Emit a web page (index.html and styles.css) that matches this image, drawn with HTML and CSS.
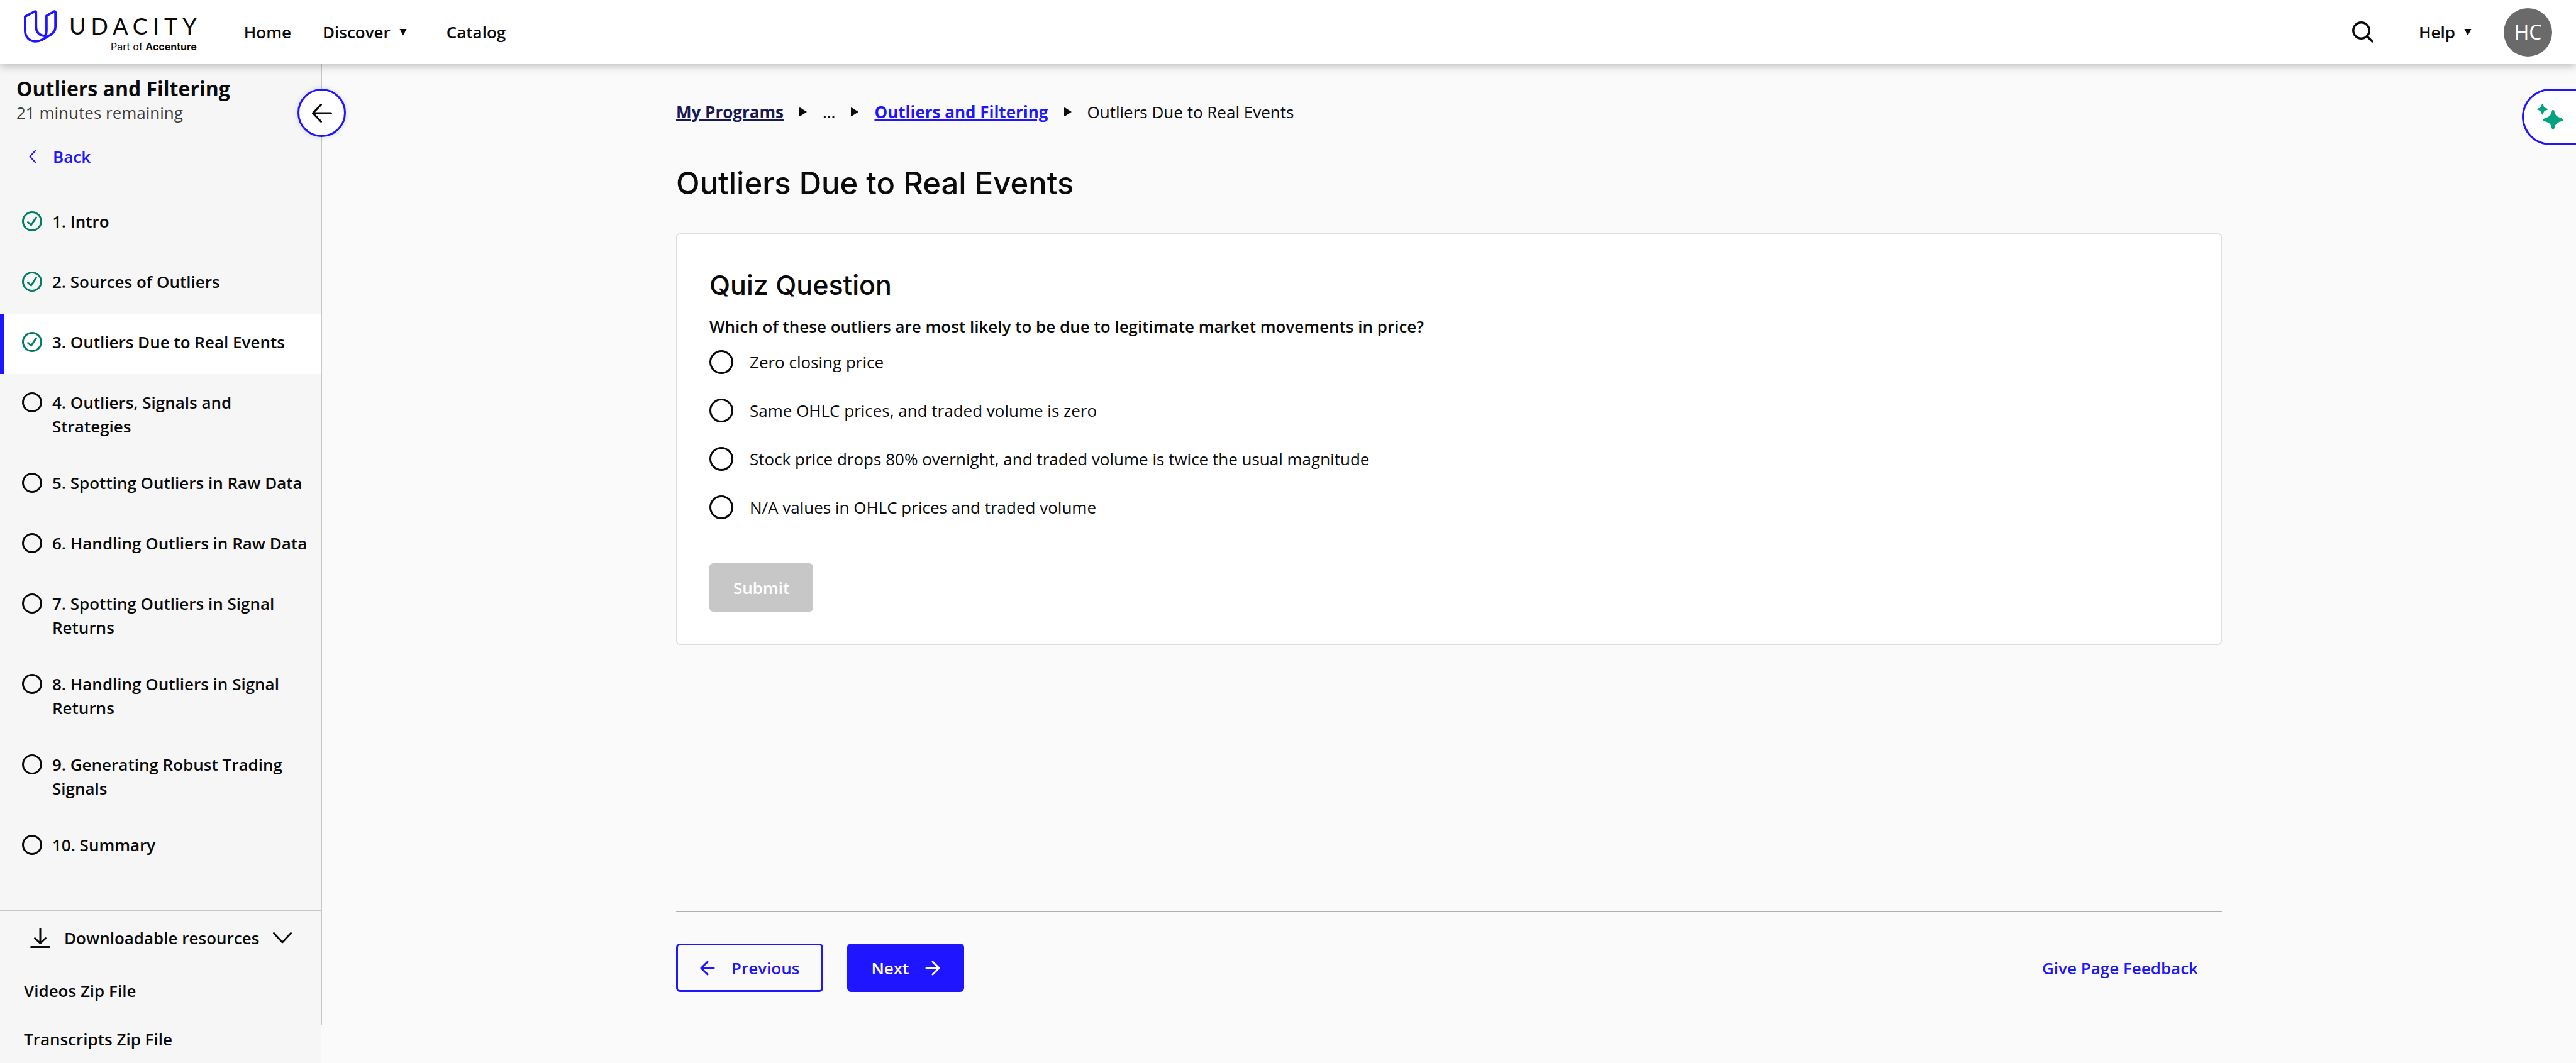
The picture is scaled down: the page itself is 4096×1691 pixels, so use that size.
FILE: index.html
```html
<!DOCTYPE html>
<html lang="en">
<head>
<meta charset="utf-8">
<meta name="viewport" content="width=device-width, initial-scale=1">
<title>Outliers Due to Real Events</title>
<link rel="stylesheet" href="styles.css">
</head>
<body>
<svg class="sprite" aria-hidden="true">
  <symbol id="check" viewBox="0 0 32 32">
    <circle cx="16" cy="16" r="14.5" fill="none" stroke="currentColor" stroke-width="3"/>
    <path d="M9.500 17.500l5 4.500 8-12" fill="none" stroke="currentColor" stroke-width="3" stroke-linecap="round" stroke-linejoin="round"/>
  </symbol>
  <symbol id="ring" viewBox="0 0 32 32">
    <circle cx="16" cy="16" r="14.500" fill="none" stroke="currentColor" stroke-width="3"/>
  </symbol>
  <symbol id="caret-down" viewBox="0 0 12 11">
    <path d="M.5 0h11L6 10.500z" fill="currentColor"/>
  </symbol>
  <symbol id="caret-right" viewBox="0 0 12 14">
    <path d="M1 0L12 7 1 14Q0 14 0 13V1Q0 0 1 0z" fill="currentColor"/>
  </symbol>
</svg>

<header class="topbar">
  <a class="logo" href="#" aria-label="Udacity, part of Accenture">
    <svg class="logo-mark" viewBox="54 62 194 192" aria-hidden="true">
      <path d="M180 214C148 214 126 193 126 160V73Q125 68 119 69L61 100V185C61 222 90 247 124 247C140 247 152 243 165 236L212 208C233 196 241 180 241 160V73Q239 68 234 69L188 95V185C188 203 184 212 170 219" fill="none" stroke="#2015ff" stroke-width="14" stroke-linejoin="round"/>
    </svg>
    <span class="wordmark">
      <span class="wordmark-name">UDACITY</span>
      <span class="wordmark-tag">Part of <b>Accenture</b></span>
    </span>
  </a>
  <nav class="topnav" aria-label="Primary">
    <a href="#">Home</a>
    <button class="menu discover" type="button">Discover <svg class="caret" aria-hidden="true"><use href="#caret-down"/></svg></button>
    <a href="#">Catalog</a>
  </nav>
  <div class="tools">
    <button class="search" type="button" aria-label="Search">
      <svg viewBox="0 0 34 34" aria-hidden="true"><g fill="none" stroke="currentColor" stroke-width="3.500" stroke-linecap="round"><circle cx="14.500" cy="14.500" r="12.700"/><path d="M24 24l8 8"/></g></svg>
    </button>
    <button class="menu" type="button">Help <svg class="caret" aria-hidden="true"><use href="#caret-down"/></svg></button>
    <button class="avatar" type="button" aria-label="Account">HC</button>
  </div>
</header>

<div class="shell">
  <aside class="sidebar">
    <div class="sidebar-content">
      <div class="lesson">
        <h2 class="lesson-title">Outliers and Filtering</h2>
        <p class="lesson-time">21 minutes remaining</p>
      </div>
      <a class="back" href="#">
        <svg viewBox="0 0 12 22" aria-hidden="true"><path d="M10.500 1.500L1.500 11l9 9.500" fill="none" stroke="currentColor" stroke-width="2" stroke-linecap="round" stroke-linejoin="round"/></svg>
        Back
      </a>
      <ol class="pages">
        <li><a class="page done" href="#"><svg aria-hidden="true"><use href="#check"/></svg><span>1. Intro</span></a></li>
        <li><a class="page done" href="#"><svg aria-hidden="true"><use href="#check"/></svg><span>2. Sources of Outliers</span></a></li>
        <li><a class="page done current" href="#" aria-current="page"><svg aria-hidden="true"><use href="#check"/></svg><span>3. Outliers Due to Real Events</span></a></li>
        <li><a class="page" href="#"><svg aria-hidden="true"><use href="#ring"/></svg><span>4. Outliers, Signals and Strategies</span></a></li>
        <li><a class="page" href="#"><svg aria-hidden="true"><use href="#ring"/></svg><span>5. Spotting Outliers in Raw Data</span></a></li>
        <li><a class="page" href="#"><svg aria-hidden="true"><use href="#ring"/></svg><span>6. Handling Outliers in Raw Data</span></a></li>
        <li><a class="page" href="#"><svg aria-hidden="true"><use href="#ring"/></svg><span>7. Spotting Outliers in Signal Returns</span></a></li>
        <li><a class="page" href="#"><svg aria-hidden="true"><use href="#ring"/></svg><span>8. Handling Outliers in Signal Returns</span></a></li>
        <li><a class="page" href="#"><svg aria-hidden="true"><use href="#ring"/></svg><span>9. Generating Robust Trading Signals</span></a></li>
        <li><a class="page" href="#"><svg aria-hidden="true"><use href="#ring"/></svg><span>10. Summary</span></a></li>
      </ol>
      <section class="resources">
        <button class="resources-toggle" type="button" aria-expanded="true">
          <svg class="download" viewBox="0 0 32 32" aria-hidden="true"><path d="M16 1.500V24M7.500 16.500l8.500 8 8.500-8M1.500 30.500h29" fill="none" stroke="currentColor" stroke-width="3" stroke-linecap="round" stroke-linejoin="round"/></svg>
          Downloadable resources
          <svg class="chevron" viewBox="0 0 30 18" aria-hidden="true"><path d="M1.500 1.500L15 16 28.500 1.500" fill="none" stroke="currentColor" stroke-width="3" stroke-linecap="round" stroke-linejoin="round"/></svg>
        </button>
        <ul class="files">
          <li><a href="#">Videos Zip File</a></li>
          <li><a href="#">Transcripts Zip File</a></li>
        </ul>
      </section>
    </div>
    <button class="collapse" type="button" aria-label="Collapse sidebar">
      <svg viewBox="0 0 32 32" aria-hidden="true"><path d="M30.500 16H1.500M14.500 2.500L1.500 16l13 13.500" fill="none" stroke="currentColor" stroke-width="3" stroke-linecap="round" stroke-linejoin="round"/></svg>
    </button>
  </aside>

  <main class="content">
    <nav class="crumbs" aria-label="Breadcrumb">
      <a class="crumb-root" href="#">My Programs</a>
      <svg aria-hidden="true"><use href="#caret-right"/></svg>
      <span>...</span>
      <svg aria-hidden="true"><use href="#caret-right"/></svg>
      <a href="#">Outliers and Filtering</a>
      <svg aria-hidden="true"><use href="#caret-right"/></svg>
      <span>Outliers Due to Real Events</span>
    </nav>
    <h1 class="title">Outliers Due to Real Events</h1>

    <form class="quiz">
      <h2 class="quiz-title">Quiz Question</h2>
      <fieldset class="choices">
        <legend>Which of these outliers are most likely to be due to legitimate market movements in price?</legend>
        <label class="choice"><input type="radio" name="answer">Zero closing price</label>
        <label class="choice"><input type="radio" name="answer">Same OHLC prices, and traded volume is zero</label>
        <label class="choice"><input type="radio" name="answer">Stock price drops 80% overnight, and traded volume is twice the usual magnitude</label>
        <label class="choice"><input type="radio" name="answer">N/A values in OHLC prices and traded volume</label>
      </fieldset>
      <button class="btn submit" type="submit" disabled>Submit</button>
    </form>

    <footer class="pager">
      <button class="btn previous" type="button">
        <svg viewBox="0 0 24 24" aria-hidden="true"><path d="M22 12H2M12 2L2 12l10 10" fill="none" stroke="currentColor" stroke-width="3" stroke-linecap="round" stroke-linejoin="round"/></svg>
        Previous
      </button>
      <button class="btn next" type="button">
        Next
        <svg viewBox="0 0 24 24" aria-hidden="true"><path d="M2 12h20M12 2l10 10-10 10" fill="none" stroke="currentColor" stroke-width="3" stroke-linecap="round" stroke-linejoin="round"/></svg>
      </button>
      <a class="feedback" href="#">Give Page Feedback</a>
    </footer>
  </main>

  <button class="assistant" type="button" aria-label="Open AI assistant">
    <svg viewBox="0 0 42 42" aria-hidden="true"><g fill="#02a381"><path d="M25.500 9.500Q27 9.500 27.500 12C29.500 19 31 20.500 38.500 23Q41.500 24 41.500 25.500Q41.500 27 38.500 28C31 30.500 29.500 32 27.500 39Q27 41.500 25.500 41.500Q24 41.500 23.500 39C21.500 32 20 30.500 12.500 28Q9.500 27 9.500 25.500Q9.500 24 12.500 23C20 20.500 21.500 19 23.500 12Q24 9.500 25.500 9.500z"/><path d="M8.500 0Q9.500 0 10 2C11 5.500 12 6.500 15.500 7.500Q17.500 8 17.500 8.800Q17.500 9.500 15.500 10C12 11 11 12 10 15.500Q9.500 17.500 8.500 17.500Q7.700 17.500 7.200 15.500C6.200 12 5 11 2 10Q0 9.500 0 8.800Q0 8 2 7.500C5 6.500 6.200 5.500 7.200 2Q7.700 0 8.500 0z"/></g></svg>
  </button>
</div>
</body>
</html>
```
FILE: styles.css
```css
:root {
  --blue: #2015ff;
  --ink: #0b0b0b;
  --line: #c6c6c6;
  --header: 102px;
}

*, *::before, *::after { box-sizing: border-box; }

body {
  margin: 0;
  background: #fafafa;
  color: var(--ink);
  font: 400 26px/38px "Open Sans", "Noto Sans", sans-serif;
}

h1, h2, p, ul, ol { margin: 0; padding: 0; font-weight: inherit; }
ul, ol { list-style: none; }
a { color: inherit; text-decoration: none; }
svg { display: block; flex: none; }

button {
  margin: 0;
  padding: 0;
  border: 0;
  background: none;
  color: inherit;
  font: inherit;
  cursor: pointer;
}

.sprite { display: none; }

/* Top bar */
.topbar {
  position: relative;
  z-index: 2;
  display: flex;
  align-items: center;
  height: var(--header);
  padding: 0 38px;
  background: #fff;
  box-shadow: 0 3px 13px rgba(0, 0, 0, .25);
  font-weight: 600;
}

.logo {
  display: flex;
  align-self: flex-start;
  gap: 20px;
  padding-top: 16px;
}

.logo-mark { width: 52px; height: 52px; }

.wordmark {
  display: flex;
  flex-direction: column;
  align-items: flex-end;
  gap: 5px;
  padding-top: 7px;
}

.wordmark-name {
  font: 400 36px/36px Lato, sans-serif;
  letter-spacing: 8px;
}

.wordmark-tag {
  padding-right: 8px;
  font: 400 16px/20px Inter, sans-serif;
}

.wordmark-tag b { font-weight: 700; }

.topnav {
  display: flex;
  gap: 50px;
  margin-left: 67px;
}

.menu { display: flex; align-items: center; gap: 14px; font-weight: 600; }
.discover { margin-right: 13px; }
.caret { width: 12px; height: 11px; }

.tools {
  display: flex;
  align-items: center;
  margin-left: auto;
}

.search { margin-right: 72px; }
.search svg { width: 34px; height: 34px; }

.avatar {
  width: 77px;
  height: 77px;
  margin-left: 51px;
  border-radius: 50%;
  background: #6a6a6a;
  color: #fff;
  font-size: 32px;
  font-weight: 400;
}

/* Sidebar */
.shell {
  position: relative;
  display: flex;
  align-items: flex-start;
}

.sidebar {
  position: relative;
  flex: none;
  width: 512px;
  height: calc(100vh - 163px);
  border-right: 2px solid var(--line);
}

.sidebar-content {
  min-height: calc(100vh - var(--header));
  padding-top: 20px;
  background: #f6f6f6;
  font-weight: 600;
}

.lesson { padding: 0 26px; }
.lesson-title { font-size: 32px; font-weight: 700; }
.lesson-time { color: #3d3d3d; font-weight: 400; }

.back {
  display: flex;
  align-items: center;
  gap: 26px;
  margin: 32px 0 39px;
  padding-left: 46px;
  color: var(--blue);
}

.back svg { width: 12px; height: 22px; }

.page {
  display: flex;
  align-items: flex-start;
  gap: 16px;
  min-height: 96px;
  padding: 26px 16px 26px 29px;
  border-left: 6px solid transparent;
}

.page svg { width: 32px; height: 32px; margin-top: 3px; }
.page.done svg { color: #047d65; }
.page.current { border-left-color: var(--blue); background: #fff; }

.resources {
  margin-top: 52px;
  padding-top: 24px;
  border-top: 2px solid var(--line);
}

.resources-toggle {
  display: flex;
  align-items: center;
  gap: 22px;
  padding-left: 48px;
  font-weight: 600;
}

.download { width: 32px; height: 32px; }
.chevron { width: 30px; height: 18px; }

.files {
  display: grid;
  gap: 39px;
  padding: 46px 38px 18px;
}

.collapse {
  position: absolute;
  top: 39px;
  right: -40px;
  display: grid;
  place-items: center;
  width: 77px;
  height: 77px;
  border: 3px solid var(--blue);
  border-radius: 50%;
  background: #fff;
  box-shadow: 0 0 8px rgba(0, 0, 0, .15);
}

.collapse svg { width: 32px; height: 32px; }

/* Page content */
.content {
  display: flex;
  flex: 1;
  flex-direction: column;
  max-width: 2458px;
  min-height: calc(100vh - var(--header));
  margin: 0 auto;
  padding: 57px 0 113px;
}

.crumbs {
  display: flex;
  align-items: center;
  gap: 25px;
}

.crumbs svg { width: 12px; height: 14px; }

.crumbs a {
  color: var(--blue);
  font-weight: 700;
  text-decoration: underline;
}

.crumbs .crumb-root { color: #171a53; }

.title, .quiz-title { font-family: Inter, sans-serif; font-weight: 500; line-height: 58px; }
.title { margin: 66px 0 50px; font-size: 49px; }
.quiz-title { margin-bottom: 18px; font-size: 43px; }

.quiz {
  padding: 51px;
  border: 2px solid #dedede;
  border-radius: 6px;
  background: #fff;
}

.choices {
  display: flex;
  flex-direction: column;
  gap: 39px;
  min-width: 0;
  margin: 0 0 70px;
  padding: 0;
  border: 0;
}

.choices legend {
  margin-bottom: 19px;
  padding: 0;
  font-weight: 600;
}

.choice { display: flex; align-items: center; gap: 26px; }

.choice input {
  flex: none;
  appearance: none;
  width: 38px;
  height: 38px;
  margin: 0;
  border: 3px solid var(--ink);
  border-radius: 50%;
}

.btn {
  display: flex;
  align-items: center;
  height: 77px;
  padding: 0 38px;
  border-radius: 6px;
  font-weight: 600;
}

.btn svg { width: 24px; height: 24px; }
.submit { background: #c7c7c7; color: #fff; }

.pager {
  display: flex;
  align-items: center;
  gap: 38px;
  margin-top: auto;
  padding-top: 50px;
  border-top: 2px solid #afafaf;
}

.previous { gap: 26px; padding: 0 35px; border: 3px solid var(--blue); color: var(--blue); }
.next { gap: 26px; background: var(--blue); color: #fff; }

.feedback {
  margin-left: auto;
  padding-right: 38px;
  color: var(--blue);
  font-weight: 600;
}

.assistant {
  position: absolute;
  top: 39px;
  right: 0;
  width: 86px;
  height: 90px;
  padding-left: 21px;
  border: 3px solid var(--blue);
  border-right: 0;
  border-radius: 45px 0 0 45px;
  background: #fff;
}

.assistant svg { width: 42px; height: 42px; }
```
